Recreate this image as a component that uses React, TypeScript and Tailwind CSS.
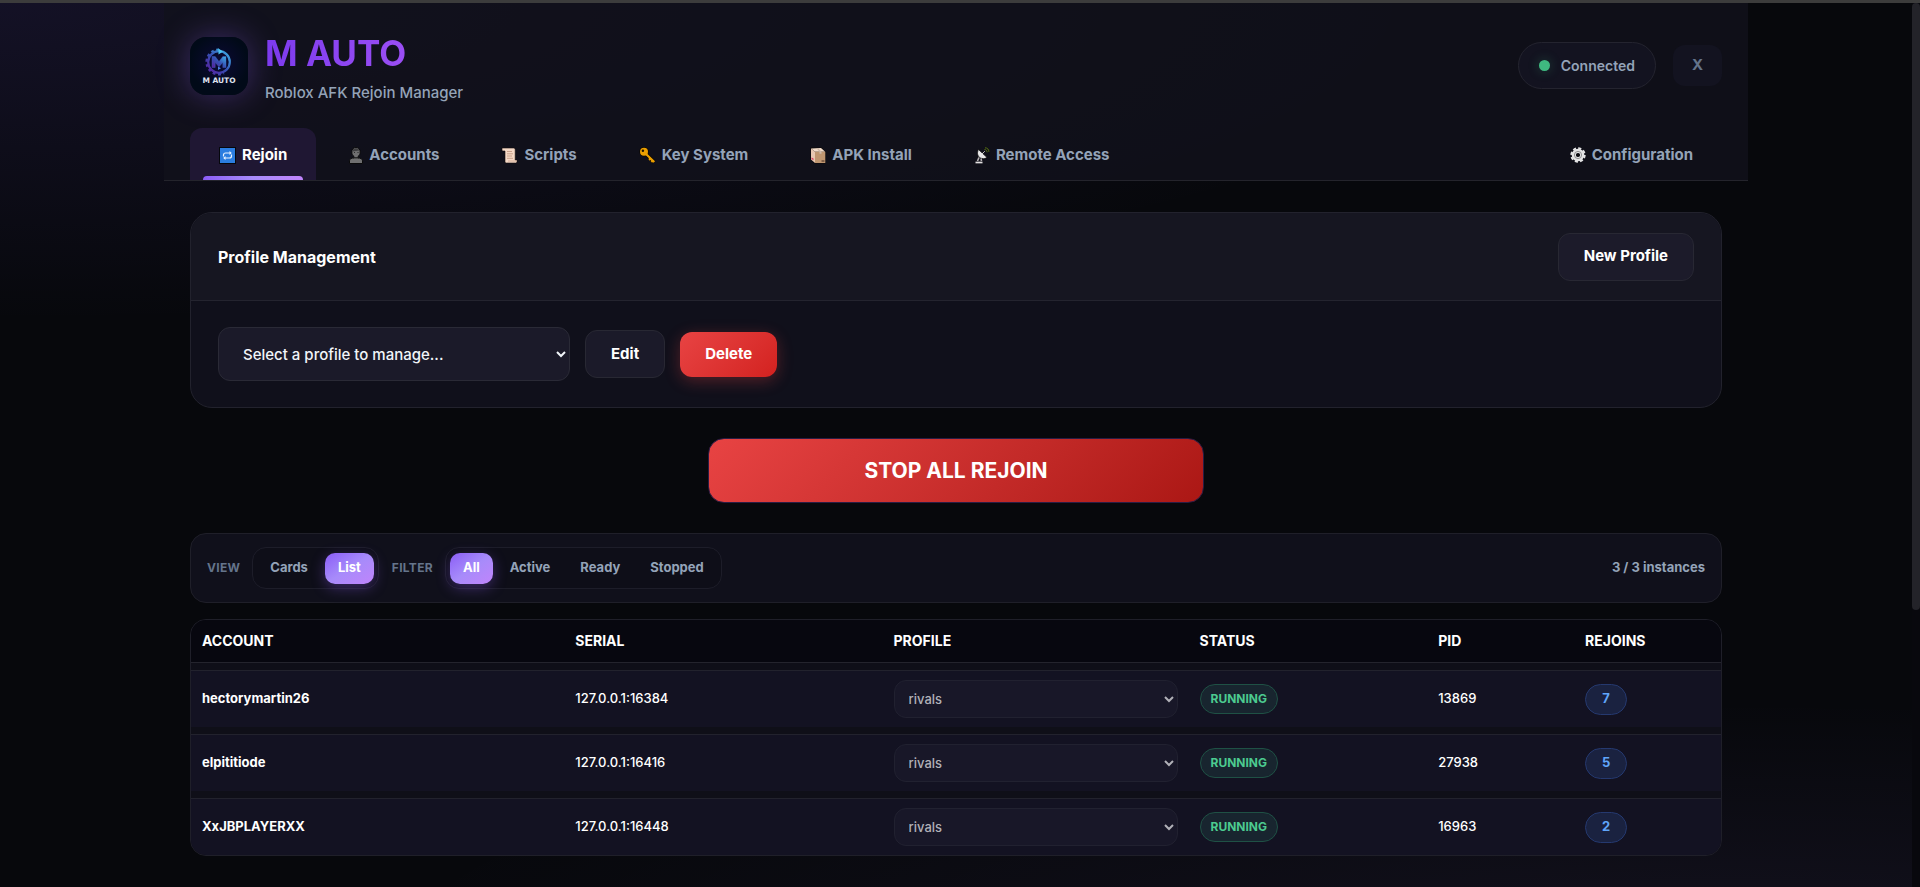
import { type ReactNode, useState } from "react";

type Instance = {
  account: string;
  serial: string;
  profile: string;
  status: string;
  pid: number;
  rejoins: number;
};

const instances: Instance[] = [
  { account: "hectorymartin26", serial: "127.0.0.1:16384", profile: "rivals", status: "RUNNING", pid: 13869, rejoins: 7 },
  { account: "elpititiode", serial: "127.0.0.1:16416", profile: "rivals", status: "RUNNING", pid: 27938, rejoins: 5 },
  { account: "XxJBPLAYERXX", serial: "127.0.0.1:16448", profile: "rivals", status: "RUNNING", pid: 16963, rejoins: 2 },
];

const views = ["Cards", "List"];
const filters = ["All", "Active", "Ready", "Stopped"];

function Logo() {
  return (
    <svg viewBox="0 0 58 58" className="h-[58px] w-[58px] rounded-2xl shadow-[0_0_32px_rgba(139,92,246,0.35)]" role="img" aria-label="M Auto logo">
      <defs>
        <linearGradient id="ring" x1="1" y1="0" x2="0" y2="1">
          <stop offset="0" stopColor="#3fb4e8" />
          <stop offset="0.5" stopColor="#3552b4" />
          <stop offset="1" stopColor="#5b1a9c" />
        </linearGradient>
        <radialGradient id="plate" cx="0.5" cy="0.45" r="0.5">
          <stop offset="0" stopColor="#0c0a36" />
          <stop offset="1" stopColor="#010a18" />
        </radialGradient>
      </defs>
      <rect width="58" height="58" fill="url(#plate)" />
      <circle cx="29" cy="25" r="10.8" fill="none" stroke="url(#ring)" strokeWidth="2.2" />
      <path d="M29 12.6A12.4 12.4 0 1 0 34 36.3" fill="none" stroke="url(#ring)" strokeWidth="2.2" strokeDasharray="2.8 2.6" />
      <path d="M22 30.5V19.5h3.2l3.8 5 3.8-5H36v11h-3.2v-5L29 29.8l-3.8-4.3v5z" fill="url(#ring)" stroke="#4460c4" strokeWidth="0.4" />
      <path d="M28.5 11.5l4.5 3-4.5 3z" fill="#4cc3ee" />
      <path d="M28 29.5l3 1.8-3 1.8z" fill="#4a7fe0" />
      <text x="29" y="45.500" textAnchor="middle" fontFamily="DejaVu Sans, sans-serif" fontSize="7.500" fontWeight="700" fill="#dfe3ee">
        M AUTO
      </text>
    </svg>
  );
}

function RejoinIcon() {
  return (
    <svg viewBox="0 0 17 17" className="h-[17px] w-[17px]" aria-hidden="true">
      <rect width="17" height="17" fill="#05070c" />
      <rect x="1" y="1" width="15" height="15" fill="#2b7de0" />
      <path d="M4.5 9.5V8A2 2 0 0 1 6.5 6H11M12.5 7.500V9a2 2 0 0 1-2 2H6" fill="none" stroke="#e8f2ff" strokeWidth="1.2" />
      <path d="M10.5 4L12.8 6l-2.3 2zM6.5 9L4.2 11l2.3 2z" fill="#e8f2ff" />
    </svg>
  );
}

function AccountIcon() {
  return (
    <svg viewBox="0 0 14 17" className="h-[17px] w-[14px]" aria-hidden="true">
      <path d="M0.5 16.5v-2.7c0-2 2-2.7 4.5-3v-1.3C3.6 8.5 2.8 7 2.8 5c0-2.8 1.5-4.5 4.2-4.5s4.2 1.7 4.2 4.5c0 2-.8 3.5-2.2 4.5v1.3c2.5.3 4.5 1 4.5 3v2.7z" fill="#6f6f70" stroke="#0a0a0b" />
      <path d="M3.5 4.5C3.5 2.2 5 1.2 7 1.2c1.6 0 2.9.8 3.4 2.3L7 4z" fill="#3e3e40" />
      <path d="M5 5.5h1M8.5 5.5h1" stroke="#2a2a2b" />
      <path d="M4 10.8h6" stroke="#1a1a1b" strokeWidth="1.2" />
    </svg>
  );
}

function ScrollIcon() {
  return (
    <svg viewBox="0 0 17 17" className="h-[17px] w-[17px]" aria-hidden="true">
      <path d="M1 1h11.5c1 0 1.7.8 1.7 1.7V13H16v1.5c0 .9-.7 1.5-1.5 1.5H5.5C4.6 16 4 15.3 4 14.5V4H2C1.3 4 1 3.5 1 3z" fill="#f5d9c6" stroke="#120c0a" strokeWidth="0.6" />
      <path d="M6 4.5h5M6 6.8h6M6 9h5M6 11.3h6" stroke="#c49b85" strokeWidth="0.9" />
      <path d="M7 14h9" stroke="#c9a18b" strokeWidth="0.8" />
    </svg>
  );
}

function KeyIcon() {
  return (
    <svg viewBox="0 0 17 17" className="h-[17px] w-[17px]" aria-hidden="true">
      <path d="M7.5 7.5l7.5 7.2M11.5 11.8l-1.2 1.3M13.6 13.7l-1.3 1.4" stroke="#0b0700" strokeWidth="3.6" />
      <circle cx="5" cy="4.8" r="4.7" fill="#0b0700" />
      <path d="M7 7l8.3 8M11.5 11.5l-1.5 1.3M13.8 13.5l-1.5 1.4" stroke="#eb9f00" strokeWidth="2.2" />
      <circle cx="5" cy="4.8" r="4" fill="#eb9f00" />
      <circle cx="3.9" cy="3.7" r="1.2" fill="#1a1204" />
    </svg>
  );
}

function BoxIcon() {
  return (
    <svg viewBox="0 0 16 17" className="h-[17px] w-4" aria-hidden="true">
      <path d="M.5.5H11.5l4 4V16.5H5L.5 12.5z" fill="#0d0908" />
      <path d="M1 1.5l10-.5 4.2 3.7-10.2.1z" fill="#f2dcc9" />
      <path d="M5 4.8h10.3V16H5z" fill="#bf9670" />
      <path d="M1 1.5l4 3.3V16l-4-3.5z" fill="#e8c8b1" />
      <path d="M6.5 1.2L9.5 4.7v2h2V4.7L8 1z" fill="#cdb9a8" />
      <path d="M1.5 12l2 1.2v-1.7l-2-1z" fill="#d2405e" />
      <path d="M11.5 14h3" stroke="#6b4c38" strokeWidth="1.5" />
    </svg>
  );
}

function DishIcon() {
  return (
    <svg viewBox="0 0 16 17" className="h-[17px] w-4" aria-hidden="true">
      <path d="M4.5 2.5c-2 3.5-1 8 3.5 9 1.8.4 3.6-.1 5-1z" fill="#e9e9ea" stroke="#0a0a0a" strokeWidth="0.7" />
      <path d="M5 10.5L3.5 14M7 11.5l.5 2.5" stroke="#b7b2b4" strokeWidth="1.6" />
      <path d="M1.5 15.5h7" stroke="#e2dfe0" strokeWidth="1.7" />
      <path d="M8 7l2.8-2.8" stroke="#c9c9c9" />
      <path d="M10.5 2.5c1.7.2 2.5 1.2 2.6 2.8M11 .8c2.5 0 3.8 1.6 3.9 4" fill="none" stroke="#5d7a10" strokeWidth="0.9" />
    </svg>
  );
}

function GearIcon() {
  return (
    <svg viewBox="0 0 16 16" className="h-4 w-4" aria-hidden="true">
      <circle cx="8" cy="8" r="6.7" fill="none" stroke="#e4e4e5" strokeWidth="2" strokeDasharray="3.1 2.162" />
      <circle cx="8" cy="8" r="4.2" fill="none" stroke="#e4e4e5" strokeWidth="4.2" />
      <circle cx="8" cy="8" r="3.6" fill="none" stroke="#77777a" strokeWidth="0.8" />
      <circle cx="8" cy="8" r="1.6" fill="#0b0b0e" />
    </svg>
  );
}

const tabs = [
  { label: "Rejoin", icon: <RejoinIcon /> },
  { label: "Accounts", icon: <AccountIcon /> },
  { label: "Scripts", icon: <ScrollIcon /> },
  { label: "Key System", icon: <KeyIcon /> },
  { label: "APK Install", icon: <BoxIcon /> },
  { label: "Remote Access", icon: <DishIcon /> },
];

function Tab({ label, icon, active, onClick }: { label: string; icon: ReactNode; active: boolean; onClick: () => void }) {
  return (
    <button
      type="button"
      onClick={onClick}
      className={`relative flex h-[52px] items-center gap-1.5 rounded-t-xl px-[29px] pt-0.5 text-[15px] font-bold ${
        active ? "bg-[#1f1733] text-white" : "text-[#94a3b8]"
      }`}
    >
      {icon}
      {label}
      {active ? (
        <span className="absolute inset-x-[13px] bottom-0 h-1 rounded-t bg-linear-to-r from-[#8b5cf6] via-[#a78bfa] to-[#c084fc]" />
      ) : null}
    </button>
  );
}

function Segmented({ label, options, value, onChange }: { label: string; options: string[]; value: string; onChange: (next: string) => void }) {
  return (
    <div className="flex items-center gap-3">
      <span className="text-xs font-bold tracking-wide text-[#64748b]">{label}</span>
      <div role="group" aria-label={label} className="flex h-[42px] items-center gap-1 rounded-[14px] border border-[#1d1d29] bg-[#0e0e18] px-1">
        {options.map((option) => (
          <button
            key={option}
            type="button"
            aria-pressed={option === value}
            onClick={() => onChange(option)}
            className={`h-[31px] rounded-[10px] px-[13px] text-[13px] font-bold ${
              option === value
                ? "bg-linear-to-br from-[#8b5cf6] via-[#a78bfa] to-[#c084fc] text-white shadow-[0_4px_14px_rgba(139,92,246,0.35)]"
                : "text-[#94a3b8]"
            }`}
          >
            {option}
          </button>
        ))}
      </div>
    </div>
  );
}

export default function App() {
  const [tab, setTab] = useState("Rejoin");
  const [view, setView] = useState("List");
  const [filter, setFilter] = useState("All");

  return (
    <div className="flex min-h-screen flex-col bg-[#07080c] font-['Inter',sans-serif] text-white">
      <div className="h-[3px] bg-[#3c3c3c]" />
      <div className="flex flex-1 bg-[radial-gradient(80%_36%_at_0%_0%,rgba(124,92,246,0.11),transparent),radial-gradient(70%_26%_at_90%_105%,rgba(168,132,252,0.07),transparent)]">
        <div className="flex-1">
          <div className="mx-auto max-w-[1584px]">
            <header className="border-b border-[#24242c] bg-[#11111b]/80 px-[26px]">
              <div className="flex h-[125px] items-center justify-between">
                <div className="flex items-center gap-[17px]">
                  <Logo />
                  <div className="pt-1">
                    <h1 className="bg-linear-to-r from-[#7c3aed] to-[#a855f7] bg-clip-text text-[35px] leading-[44px] font-bold text-transparent">
                      M AUTO
                    </h1>
                    <p className="mt-1.5 text-[15px] leading-6 font-medium text-[#94a3b8]">Roblox AFK Rejoin Manager</p>
                  </div>
                </div>
                <div className="flex items-center gap-[17px]">
                  <div className="flex h-[47px] items-center gap-[11px] rounded-full border border-[#24242f] bg-[#131320] px-5 text-sm font-semibold text-[#94a3b8]">
                    <span className="h-[11px] w-[11px] rounded-full bg-[#3fb980] shadow-[0_0_12px_rgba(63,185,128,0.3)]" />
                    Connected
                  </div>
                  <button type="button" className="h-[41px] w-[49px] rounded-xl bg-[#131320] text-[15px] font-bold text-[#64748b]">
                    X
                  </button>
                </div>
              </div>
              <nav className="flex justify-between">
                <div className="flex gap-1">
                  {tabs.map(({ label, icon }) => (
                    <Tab key={label} label={label} icon={icon} active={tab === label} onClick={() => setTab(label)} />
                  ))}
                </div>
                <Tab label="Configuration" icon={<GearIcon />} active={tab === "Configuration"} onClick={() => setTab("Configuration")} />
              </nav>
            </header>

            <main className="px-[26px] py-[31px]">
              <section className="overflow-hidden rounded-[22px] border border-[#22222d] bg-[#10101b]">
                <div className="flex h-[88px] items-center justify-between border-b border-[#24242f] bg-[#161621] px-[27px]">
                  <h2 className="text-base font-bold">Profile Management</h2>
                  <button type="button" className="h-12 rounded-xl border border-[#282833] bg-[#1c1b2a] px-[25px] text-[15px] font-bold">
                    New Profile
                  </button>
                </div>
                <div className="flex h-[106px] items-center gap-[15px] px-[27px]">
                  <select aria-label="Profile" className="h-[54px] w-[352px] rounded-xl border border-[#2a2a36] bg-[#1b1a29] px-5 text-[15px] font-medium text-[#f1f5f9]">
                    <option>Select a profile to manage...</option>
                  </select>
                  <button type="button" className="h-12 rounded-xl border border-[#282833] bg-[#1b1a29] px-[25px] text-[15px] font-bold">
                    Edit
                  </button>
                  <button
                    type="button"
                    className="h-[45px] rounded-xl bg-linear-135 from-[#e84343] to-[#d3211f] px-[25px] text-[15px] font-bold shadow-[0_4px_16px_rgba(239,68,68,0.3)]"
                  >
                    Delete
                  </button>
                </div>
              </section>

              <button
                type="button"
                className="mx-auto mt-[30px] block h-[65px] w-[496px] rounded-2xl border border-[#2a1c44] bg-linear-135 from-[#e84343] to-[#ab1714] text-[21px] font-bold"
              >
                STOP ALL REJOIN
              </button>

              <div className="mt-[30px] flex h-[70px] items-center justify-between rounded-2xl border border-[#1f1f29] bg-[#10101b] px-4">
                <div className="flex items-center gap-[13px]">
                  <Segmented label="VIEW" options={views} value={view} onChange={setView} />
                  <Segmented label="FILTER" options={filters} value={filter} onChange={setFilter} />
                </div>
                <p className="text-[13px] font-bold text-[#94a3b8]">3 / 3 instances</p>
              </div>

              <div className="mt-4 overflow-hidden rounded-2xl border border-[#1f1f29] bg-[#0f0f18]">
                <table className="-my-[7px] w-full table-fixed border-separate border-spacing-x-0 border-spacing-y-[7px] text-left text-[13px]">
                  <colgroup>
                    <col className="w-[24.4%]" />
                    <col className="w-[20.8%]" />
                    <col className="w-[20%]" />
                    <col className="w-[15.6%]" />
                    <col className="w-[9.6%]" />
                    <col />
                  </colgroup>
                  <thead>
                    <tr className="[&>th]:h-[43px] [&>th]:border-b [&>th]:border-[#24242d] [&>th]:bg-[#07070f] [&>th]:px-[11px] [&>th]:text-sm [&>th]:font-bold">
                      <th>ACCOUNT</th>
                      <th>SERIAL</th>
                      <th>PROFILE</th>
                      <th>STATUS</th>
                      <th>PID</th>
                      <th>REJOINS</th>
                    </tr>
                  </thead>
                  <tbody>
                    {instances.map((item) => (
                      <tr
                        key={item.serial}
                        className="[&>td]:h-[57px] [&>td]:border-t [&>td]:border-[#22222d] [&>td]:bg-[#131222] [&>td]:px-[11px]"
                      >
                        <td className="font-bold">{item.account}</td>
                        <td className="font-medium">{item.serial}</td>
                        <td>
                          <select
                            aria-label={`Profile for ${item.account}`}
                            defaultValue={item.profile}
                            className="block h-[38px] w-full rounded-xl border border-[#212130] bg-[#181728] px-2.5 text-[13px] font-medium text-[#b1b1b8]"
                          >
                            <option>{item.profile}</option>
                          </select>
                        </td>
                        <td>
                          <span className="inline-flex h-[30px] items-center rounded-full border border-[#1f5145] bg-[#18252f] px-2.5 text-xs font-bold text-[#4ccb90]">
                            {item.status}
                          </span>
                        </td>
                        <td className="font-medium">{item.pid}</td>
                        <td>
                          <span className="inline-flex h-[31px] w-[42px] items-center justify-center rounded-full border border-[#25396f] bg-[#1a2240] text-[13px] font-bold text-[#60a5fa]">
                            {item.rejoins}
                          </span>
                        </td>
                      </tr>
                    ))}
                  </tbody>
                </table>
              </div>
            </main>
          </div>
        </div>
        {/* scroll rail */}
        <div className="w-2 bg-[#08080d]" aria-hidden="true">
          <div className="h-[607px] rounded-full bg-[#232329]" />
        </div>
      </div>
    </div>
  );
}
